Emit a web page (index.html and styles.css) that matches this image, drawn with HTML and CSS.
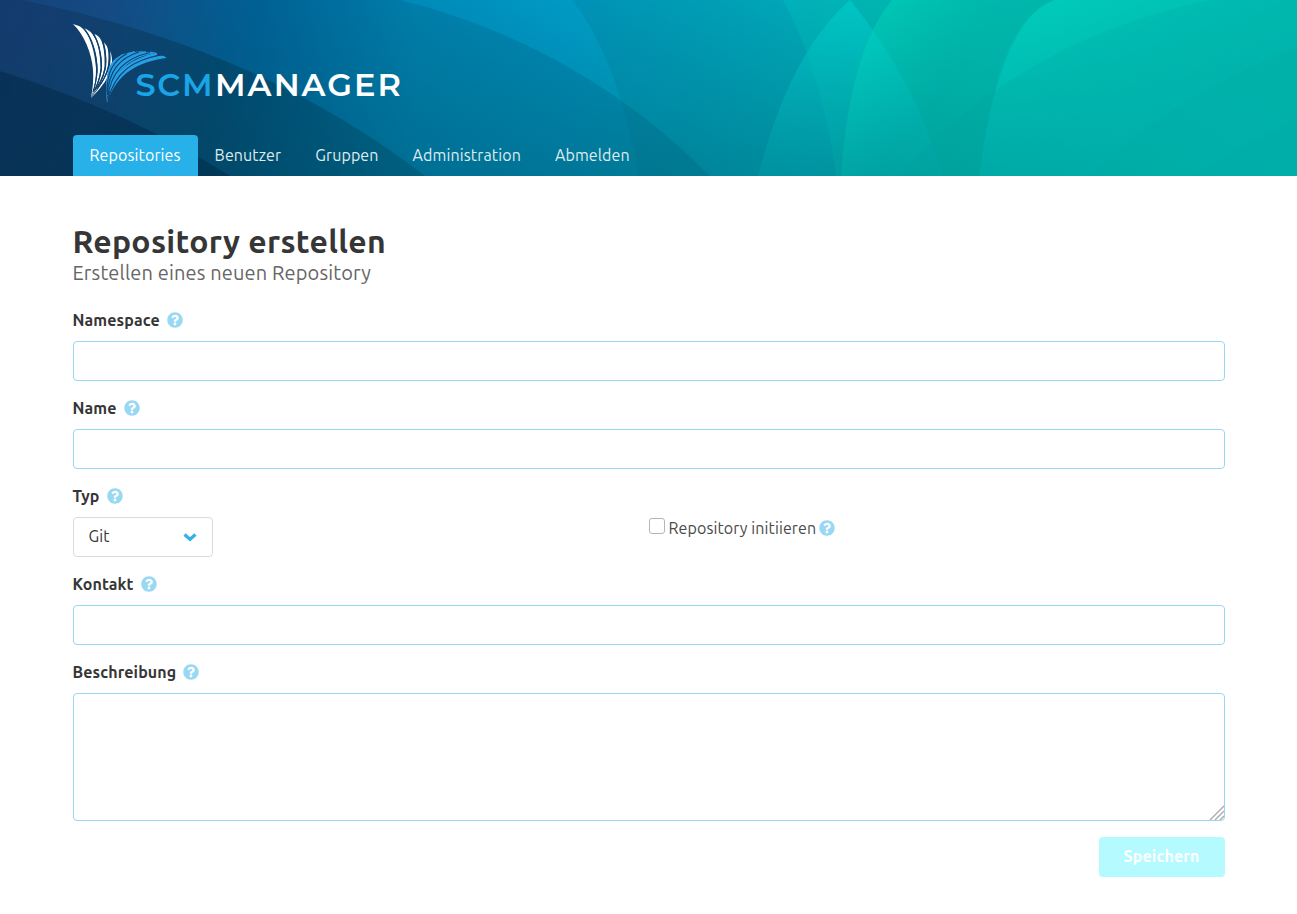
FILE: index.html
```html
<!DOCTYPE html>
<html lang="de">
<head>
<meta charset="utf-8">
<title>SCM-Manager</title>
<link rel="stylesheet" href="styles.css">
</head>
<body>
<svg class="symbols" aria-hidden="true">
  <symbol id="help" viewBox="0 0 512 512"><path fill="currentColor" d="M504 256c0 136.997-111.043 248-248 248S8 392.997 8 256C8 119.083 119.043 8 256 8s248 111.083 248 248zM262.655 90c-54.497 0-89.255 22.957-116.549 63.758-3.536 5.286-2.353 12.415 2.715 16.258l34.699 26.31c5.205 3.947 12.621 3.008 16.665-2.122 17.864-22.658 30.113-35.797 57.303-35.797 20.429 0 45.698 13.148 45.698 32.958 0 14.976-12.363 22.667-32.534 33.976C247.128 238.528 216 254.941 216 296v4c0 6.627 5.373 12 12 12h56c6.627 0 12-5.373 12-12v-1.333c0-28.462 83.186-29.647 83.186-106.667 0-58.002-60.165-102-116.531-102zM256 338c-25.365 0-46 20.635-46 46 0 25.364 20.635 46 46 46s46-20.636 46-46c0-25.365-20.635-46-46-46z"/></symbol>
</svg>
<header class="hero">
  <svg class="hero-art" viewBox="0 0 1297 176" preserveAspectRatio="none" aria-hidden="true">
    <defs>
      <linearGradient id="base" gradientUnits="userSpaceOnUse" x1="0" y1="0" x2="1297" y2="0">
        <stop offset="0" stop-color="#1c3e7b"/><stop offset=".085" stop-color="#1b4989"/><stop offset=".2" stop-color="#00659f"/><stop offset=".32" stop-color="#008aba"/><stop offset=".44" stop-color="#009ac5"/><stop offset=".53" stop-color="#00a8c2"/><stop offset=".61" stop-color="#00b5c5"/><stop offset=".7" stop-color="#00bdb6"/><stop offset="1" stop-color="#00beb4"/>
      </linearGradient>
      <linearGradient id="shade" x1="0" y1="0" x2="0" y2="1"><stop offset="0" stop-color="#005468" stop-opacity="0"/><stop offset="1" stop-color="#005468" stop-opacity=".36"/></linearGradient>
      <linearGradient id="fade" x1="0" y1="0" x2="1" y2="0"><stop offset="0" stop-color="#00bab0" stop-opacity="0"/><stop offset=".6" stop-color="#00bab0" stop-opacity=".7"/><stop offset="1" stop-color="#00bab0" stop-opacity=".9"/></linearGradient>
      <linearGradient id="lens" gradientUnits="userSpaceOnUse" x1="0" y1="0" x2="0" y2="176"><stop offset="0" stop-color="#00d0cf" stop-opacity=".6"/><stop offset="1" stop-color="#00a5ab" stop-opacity=".3"/></linearGradient>
      <linearGradient id="glow" gradientUnits="userSpaceOnUse" x1="1040" y1="0" x2="1110" y2="150"><stop offset="0" stop-color="#00d5c0" stop-opacity=".6"/><stop offset="1" stop-color="#00b8b2" stop-opacity=".3"/></linearGradient>
      <linearGradient id="glow2" gradientUnits="userSpaceOnUse" x1="885" y1="0" x2="965" y2="60"><stop offset="0" stop-color="#00d8bd" stop-opacity=".5"/><stop offset="1" stop-color="#00c0b0" stop-opacity=".12"/></linearGradient>
      <linearGradient id="edge" gradientUnits="userSpaceOnUse" x1="22" y1="0" x2="420" y2="100"><stop offset="0" stop-color="#102850" stop-opacity=".3"/><stop offset=".5" stop-color="#002f42" stop-opacity=".4"/><stop offset="1" stop-color="#00384a" stop-opacity=".28"/></linearGradient>
    </defs>
    <path fill="url(#base)" d="M0 0H1297V176H0Z"/>
    <path fill="url(#shade)" d="M0 0H1297V176H0Z"/>
    <path fill="url(#fade)" d="M850 0H1297V176H850Z"/>
    <path fill="#006f80" fill-opacity=".2" d="M572 0Q620 62 638 176H836Q824 78 783 0Z"/>
    <path fill="#009e90" fill-opacity=".2" d="M783 0Q824 78 836 176H979Q995 20 1055 0Z"/>
    <path fill="#005070" fill-opacity=".22" d="M400 0Q580 45 710 176H0V0Z"/>
    <path fill="url(#edge)" d="M0 0H22Q260 48 425 176H0Z"/>
    <path fill="#002440" fill-opacity=".42" d="M0 71Q130 112 230 176H0Z"/>
    <path fill="url(#lens)" d="M850 0Q790 52 758 176H943Q914 78 850 0Z"/>
    <path fill="url(#glow2)" d="M892 0Q850 50 841 176H979Q995 20 1055 0Z"/>
    <path fill="url(#glow)" d="M1055 0Q1000 18 979 176H1297V0Z"/>
    <path fill="#009c99" fill-opacity=".15" d="M1210 0Q1020 40 900 176H1297V0Z"/>
    <path fill="#009c98" fill-opacity=".08" d="M1297 47Q1170 98 1090 176H1297Z"/>
    <path fill="#009c98" fill-opacity=".06" d="M1297 118L1190 176H1297Z"/>
  </svg>
  <div class="container hero-body">
    <svg class="logo" viewBox="0 0 328 82" role="img" aria-label="SCM Manager">
      <g fill="#fff">
        <path d="M0 0C11 10 19 30 20 46Q21 58 18 74Q23.500 58 23 44C21.500 25 16 8 7 2.500Q4 1 0 0Z"/>
        <path d="M11 4C20 15 24.500 33 24.700 46Q24 60 18 74Q26 59 27.500 44C27.500 28 24 13 17 7.500Q14 5 11 4Z"/>
        <path d="M21.500 10C27 20 29.500 34 29 45Q27 60 18 74Q29.500 58 31.500 43C32 29 30.500 18 26 13Q24 11 21.500 10Z"/>
        <path d="M31 18.500C33 26 34 36 33 44Q30 59 18 74Q33 55 35 41C36 32 35.500 26 34 22.500Q32.500 20 31 18.500Z"/>
        <path d="M37 27C38 34 37.800 38 36.500 43Q33 56 18 74Q35 58 38.500 43C39.500 36 39 31 37 27Z"/>
      </g>
      <g class="gaps">
        <path d="M9 2.500C19 12 24 30 24 46Q23.500 58 20 68"/>
        <path d="M19.500 9C26 18 28.500 32 28.300 45Q26.500 57 21 67"/>
        <path d="M29.500 17C32.500 26 33.300 36 32.300 44Q29 57 22 66"/>
        <path d="M36 25C37 33 36.500 39 35.500 43.500Q32 55 24 65"/>
      </g>
      <g fill="#279fe5">
        <path d="M93.500 34C66 38 44 48 34 79C41 46 60 34 87 31.500Q92 31.500 93.500 34Z"/>
        <path d="M83 29C58 33 39 46 34 79C36 46 53 31 75 28Q79 27 83 29Z"/>
        <path d="M71.500 27.500C51 33 37 45 34 79C33 46 46 31 65 27.500Q68 27 71.500 27.500Z"/>
        <path d="M59.500 28C45 34 35.500 45 34 79C32 46 40 33 54 29Q57 28 59.500 28Z"/>
        <path d="M48.500 31.500C39 38 35 48 34 76C32 48 36 38 45 33Q46 32 48.500 31.500Z"/>
      </g>
      <g fill="none" stroke="#279fe5" stroke-width="2.400" stroke-linecap="round">
        <path d="M37 66C43 47 58 36 83 30"/><path d="M36 64C39 45 52 34 72 28.500"/><path d="M35 62C37 44 46 34 61 28.500"/><path d="M34.500 61C35 46 40 37 50 31"/>
      </g>
      <g class="gaps">
        <path d="M35 76C42 48 60 36 88 31"/>
        <path d="M34.600 74C38 47 53 34 77 28.500"/>
        <path d="M34.200 71C36 46 47 34 66 28"/>
        <path d="M34 68C34 48 40 37 54 29.500"/>
      </g>
      <text class="wordmark wordmark-scm" x="62.500" y="72" textLength="77" lengthAdjust="spacing">SCM</text>
      <text class="wordmark" x="142" y="72" textLength="186" lengthAdjust="spacing">MANAGER</text>
    </svg>
    <nav class="tabs">
      <a class="tab active">Repositories</a>
      <a class="tab">Benutzer</a>
      <a class="tab">Gruppen</a>
      <a class="tab">Administration</a>
      <a class="tab">Abmelden</a>
    </nav>
  </div>
</header>
<main class="container content">
  <h1 class="title">Repository erstellen</h1>
  <h2 class="subtitle">Erstellen eines neuen Repository</h2>
  <form class="form">
    <div class="field"><label class="label">Namespace<svg class="help"><use href="#help"/></svg></label><input class="input" type="text"></div>
    <div class="field"><label class="label">Name<svg class="help"><use href="#help"/></svg></label><input class="input" type="text"></div>
    <div class="columns">
      <div class="field"><label class="label">Typ<svg class="help"><use href="#help"/></svg></label>
        <div class="select"><span>Git</span><svg class="chevron" viewBox="0 0 14 10"><path d="M1.500 2.500L7 7.300L12.500 2.500"/></svg></div>
      </div>
      <label class="checkbox"><input class="box" type="checkbox"><span>Repository initiieren</span><svg class="help"><use href="#help"/></svg></label>
    </div>
    <div class="field"><label class="label">Kontakt<svg class="help"><use href="#help"/></svg></label><input class="input" type="text"></div>
    <div class="field"><label class="label">Beschreibung<svg class="help"><use href="#help"/></svg></label>
      <div class="area-wrap"><textarea class="input area"></textarea><svg class="grip" viewBox="0 0 15 15"><path d="M1 15L15 1M6 15L15 6M11 15L15 11"/></svg></div>
    </div>
    <div class="actions"><button class="save" type="button" disabled>Speichern</button></div>
  </form>
</main>
</body>
</html>
```
FILE: styles.css
```css
* { box-sizing: border-box; }
body { margin: 0; background: #fff; color: #363636; font: 16px/24px Ubuntu, "Noto Sans", sans-serif; letter-spacing: .1px; overflow: hidden; }
.symbols { position: absolute; width: 0; height: 0; }
.container { width: 1152px; margin: 0 auto; }
.hero { position: relative; height: 176px; }
.hero-art { position: absolute; inset: 0; width: 100%; height: 100%; }
.hero-body { position: relative; height: 176px; display: flex; flex-direction: column; justify-content: space-between; align-items: flex-start; padding-top: 24px; }
.logo { display: block; width: 328px; height: 82px; overflow: visible; }
.gaps { fill: none; stroke: #0d3f6c; stroke-width: 1.100px; }
.wordmark { font: 600 32px Montserrat, Lato, sans-serif; letter-spacing: 0; fill: #fff; }
.wordmark-scm { fill: #1ba4e6; }
.tabs { display: flex; height: 41px; }
.tab { display: flex; align-items: center; padding: 0 17px 2px; color: #dfecee; white-space: nowrap; letter-spacing: .12px; }
.tab.active { background: #28b1e8; color: #fff; border-radius: 4px 4px 0 0; }
.content { padding-top: 47px; }
.title { margin: 0 0 1px; font-size: 32px; line-height: 36px; font-weight: 700; letter-spacing: .3px; }
.subtitle { margin: 0 0 23px; font-size: 20px; line-height: 25px; font-weight: 400; color: #666; letter-spacing: .14px; }
.form { display: flex; flex-direction: column; gap: 15px; }
.field { display: flex; flex-direction: column; }
.label { display: flex; align-items: center; gap: 7px; height: 24px; margin-bottom: 9px; font-weight: 700; letter-spacing: .12px; }
.help { width: 16px; height: 16px; color: #98d8f3; flex: none; }
.input { display: block; width: 100%; height: 40px; border: 1px solid #98d8f3; border-radius: 4px; background: #fff; outline: 0; }
.columns { display: grid; grid-template-columns: 1fr 1fr; }
.select { width: 140px; height: 40px; border: 1px solid #dbdbdb; border-radius: 4px; display: flex; align-items: center; justify-content: space-between; padding: 0 15px; }
.select span { margin-top: -2px; }
.chevron { width: 14px; height: 10px; fill: none; stroke: #33b2e8; stroke-width: 3.200px; }
.checkbox { display: flex; height: 24px; align-items: center; margin-top: 32px; color: #4a4a4a; }
.checkbox .help { margin-left: 3px; }
.box { appearance: none; width: 16px; height: 16px; margin: 0 4px 4px 0; border: 1px solid #b1b5c0; border-radius: 3px; }
.area-wrap { position: relative; }
.area { height: 128px; resize: none; }
.grip { position: absolute; right: 1px; bottom: 1px; width: 15px; height: 15px; fill: none; stroke: #aaa; stroke-width: 1.400px; }
.actions { display: flex; justify-content: flex-end; margin-top: 1px; }
.save { width: 126px; height: 40px; padding: 0 0 2px; border: 0; border-radius: 4px; background: #b5faff; color: #fff; font: 700 16px/24px Ubuntu, "Noto Sans", sans-serif; letter-spacing: .15px; }
```
